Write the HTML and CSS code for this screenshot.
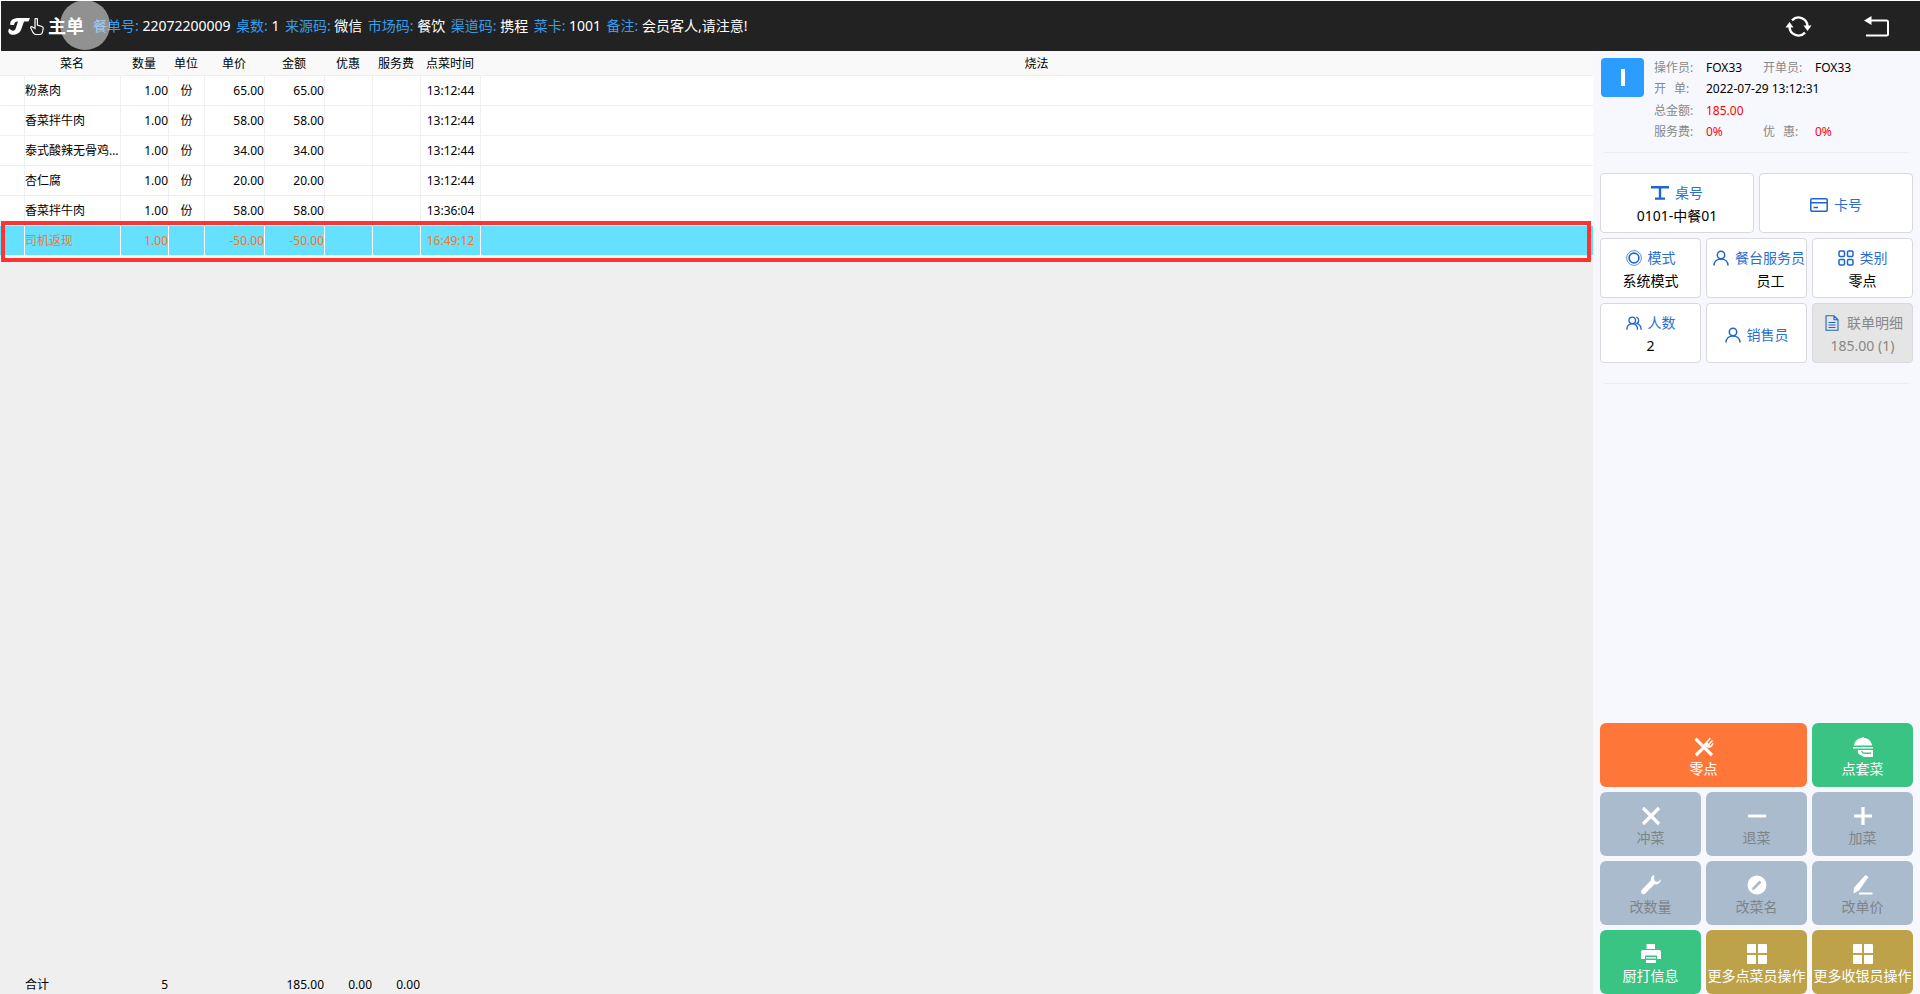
FILE: index.html
```html
<!DOCTYPE html>
<html lang="zh-CN">
<head>
<meta charset="utf-8">
<title>主单</title>
<link rel="stylesheet" href="styles.css">
</head>
<body>
<div class="page">
  <header class="topbar">
    <div class="logo">
      <svg class="logo-t" viewBox="0 0 22 17"><path d="M2.500 7C1 2 6 0 11 0H22L20.500 3.500H16L13 12C11.500 16 6 17.500 3 16.500C0 15.500 -.5 12 1.500 10.500C3 13 6.500 13.500 7.500 11L10 3.500C8 3.500 6 4.500 6 7Z"/></svg>
      <svg class="logo-hand" viewBox="0 0 14 17"><path d="M5 1.500a1.200 1.200 0 0 1 2.400 0V7L12 8.500c1 .3 1.300 1 1.200 2L12.500 14c-.2 1.500-1 2.500-3 2.500H6c-1.500 0-2-1-3-2L.8 10c-.5-1 .8-2 1.800-1L5 10.500Z"/></svg>
      <span class="logo-text">主单</span>
    </div>
    <div class="meta">
      <span><b>餐单号: </b>22072200009</span>
      <span><b>桌数: </b>1</span>
      <span><b>来源码: </b>微信</span>
      <span><b>市场码: </b>餐饮</span>
      <span><b>渠道码: </b>携程</span>
      <span><b>菜卡: </b>1001</span>
      <span><b>备注: </b>会员客人,请注意!</span>
    </div>
    <div class="top-actions">
      <svg class="ic-refresh" viewBox="0 0 27 21"><path d="M7 4.300A9 9 0 0 1 22.500 10M20 16.700A9 9 0 0 1 4.500 11"/><polygon points="18.500,9.500 26.500,9.500 22.500,15"/><polygon points="0.500,11.500 8.500,11.500 4.500,6"/></svg>
      <svg class="ic-back" viewBox="0 0 25 21"><polygon points="0,4.500 7.500,0 7.500,9"/><path d="M7 4.500H22.500Q24 4.500 24 6V18Q24 19.500 22.500 19.500H2"/></svg>
    </div>
    <div class="touch-dot"></div>
  </header>

  <div class="content">
    <main class="main">
      <div class="row head">
        <div></div><div>菜名</div><div>数量</div><div>单位</div><div>单价</div><div>金额</div><div>优惠</div><div>服务费</div><div>点菜时间</div><div>烧法</div>
      </div>
      <div class="row item">
        <div></div><div class="name">粉蒸肉</div><div class="num">1.00</div><div>份</div><div class="num">65.00</div><div class="num">65.00</div><div></div><div></div><div>13:12:44</div><div></div>
      </div>
      <div class="row item">
        <div></div><div class="name">香菜拌牛肉</div><div class="num">1.00</div><div>份</div><div class="num">58.00</div><div class="num">58.00</div><div></div><div></div><div>13:12:44</div><div></div>
      </div>
      <div class="row item">
        <div></div><div class="name">泰式酸辣无骨鸡爪</div><div class="num">1.00</div><div>份</div><div class="num">34.00</div><div class="num">34.00</div><div></div><div></div><div>13:12:44</div><div></div>
      </div>
      <div class="row item">
        <div></div><div class="name">杏仁腐</div><div class="num">1.00</div><div>份</div><div class="num">20.00</div><div class="num">20.00</div><div></div><div></div><div>13:12:44</div><div></div>
      </div>
      <div class="row item">
        <div></div><div class="name">香菜拌牛肉</div><div class="num">1.00</div><div>份</div><div class="num">58.00</div><div class="num">58.00</div><div></div><div></div><div>13:36:04</div><div></div>
      </div>
      <div class="row item selected">
        <div></div><div class="name">司机返现</div><div class="num">1.00</div><div></div><div class="num">-50.00</div><div class="num">-50.00</div><div></div><div></div><div>16:49:12</div><div></div>
      </div>
      <div class="row total">
        <div></div><div class="name">合计</div><div class="num">5</div><div></div><div></div><div class="num">185.00</div><div class="num">0.00</div><div class="num">0.00</div><div></div><div></div>
      </div>
      <div class="highlight"></div>
    </main>

    <aside class="side">
      <section class="info">
        <div class="badge"><span></span></div>
        <div class="info-grid">
          <span class="lb">操作员:</span><span>FOX33</span><span class="lb">开单员:</span><span>FOX33</span>
          <span class="lb">开&ensp;&thinsp;单:</span><span class="wide">2022-07-29 13:12:31</span>
          <span class="lb">总金额:</span><span class="wide red">185.00</span>
          <span class="lb">服务费:</span><span class="red">0%</span><span class="lb">优&ensp;&thinsp;惠:</span><span class="red">0%</span>
        </div>
      </section>
      <hr class="rule">
      <section class="cards">
        <div class="card s3">
          <div class="card-label"><svg class="ic" viewBox="0 0 18 14"><path d="M0 0H18V2.500H10.200V11.500H14V13.800H4V11.500H7.800V2.500H0Z"/></svg>桌号</div>
          <div class="card-value">0101-中餐01</div>
        </div>
        <div class="card s3">
          <div class="card-label"><svg class="ic ic-card" viewBox="0 0 18 14"><path d="M2 .8H16A1.200 1.200 0 0 1 17.200 2V12A1.200 1.200 0 0 1 16 13.200H2A1.200 1.200 0 0 1 .8 12V2A1.200 1.200 0 0 1 2 .8ZM.8 4.800H17.200"/><path d="M3.500 9.500H8"/></svg>卡号</div>
        </div>
        <div class="card s2">
          <div class="card-label"><svg class="ic ic-line ic-m" viewBox="0 0 18 18"><circle cx="9" cy="9" r="8.300" stroke-width=".8"/><circle cx="9" cy="9" r="5.500" stroke-width="1.800"/></svg>模式</div>
          <div class="card-value">系统模式</div>
        </div>
        <div class="card s2">
          <div class="card-label nudge"><svg class="ic ic-line ic-m" viewBox="0 0 16 16"><circle cx="8" cy="5" r="3.700"/><path d="M1 15.500C1 11.500 4 9 8 9S15 11.500 15 15.500"/></svg>餐台服务员</div>
          <div class="card-value shifted">员工</div>
        </div>
        <div class="card s2">
          <div class="card-label"><svg class="ic ic-line ic-m" viewBox="0 0 16 16"><rect x="1" y="1" width="5.500" height="5.500" rx="1.200"/><rect x="9.500" y="1" width="5.500" height="5.500" rx="1.200"/><rect x="1" y="9.500" width="5.500" height="5.500" rx="1.200"/><rect x="9.500" y="9.500" width="5.500" height="5.500" rx="1.200"/></svg>类别</div>
          <div class="card-value">零点</div>
        </div>
        <div class="card s2">
          <div class="card-label"><svg class="ic ic-line ic-m" viewBox="0 0 18 16"><circle cx="7" cy="5" r="3.700"/><path d="M1 15.500C1 11.500 3 9 7 9S13 11.500 13 15.500M11.500 1.500A3.700 3.700 0 0 1 12 8.500C15 9.300 17 11.500 17 15.500"/></svg>人数</div>
          <div class="card-value">2</div>
        </div>
        <div class="card s2">
          <div class="card-label"><svg class="ic ic-line ic-m" viewBox="0 0 16 16"><circle cx="8" cy="5" r="3.700"/><path d="M1 15.500C1 11.500 4 9 8 9S15 11.500 15 15.500"/></svg>销售员</div>
        </div>
        <div class="card s2 muted">
          <div class="card-label wide-gap"><svg class="ic ic-line ic-doc" viewBox="0 0 14 16"><path d="M1 .8H9L13 4.800V15.200H1ZM9 .8V4.800H13M3.500 7.500H10.500M3.500 10H10.500M3.500 12.500H10.500"/></svg>联单明细</div>
          <div class="card-value">185.00 (1)</div>
        </div>
      </section>
      <hr class="rule rule-2">
      <section class="actions">
        <div class="act orange wide-act">
          <svg class="act-ic" viewBox="0 0 20 20"><path d="M2.500 .5L19 17L17 19.500L.5 3Z"/><path d="M8.500 9.500L.8 17L3 19.500L11 11.500Z"/><path d="M9.500 7.500L15.800 .8L16.800 1.800L13.500 5.700L14.500 6.700L18 3L19 4L15.500 7.700L16.300 8.500L19.300 5.500C20 8 17.500 12 12.500 10.500Z"/></svg>
          <span>零点</span>
        </div>
        <div class="act green">
          <svg class="act-ic" viewBox="0 0 20 20"><path d="M10 0A1 1 0 0 1 11 1C16 1.500 18.500 4.500 19 8.500H1C1.500 4.500 4 1.500 9 1A1 1 0 0 1 10 0ZM0 10H20V11.500H0ZM5 13H20V20H11L6.500 17.500C5 16.500 4.500 15 5 13ZM8 14C8.500 16 10 17 12.500 17H18V15.500H12C10.500 15.500 9.800 15 9.500 14Z" fill-rule="evenodd"/></svg>
          <span>点套菜</span>
        </div>
        <div class="act slate">
          <svg class="act-ic act-stroke" viewBox="0 0 20 20"><path d="M2 2L18 18M18 2L2 18"/></svg>
          <span>冲菜</span>
        </div>
        <div class="act slate">
          <svg class="act-ic act-stroke" viewBox="0 0 22 20"><path d="M1 10H21"/></svg>
          <span>退菜</span>
        </div>
        <div class="act slate">
          <svg class="act-ic act-stroke" viewBox="0 0 20 20"><path d="M1 10H19M10 1V19"/></svg>
          <span>加菜</span>
        </div>
        <div class="act slate">
          <svg class="act-ic" viewBox="0 0 20 20"><path d="M13.500 0C11 .3 9.500 2.500 10 5.200L.7 15C-.3 16.200 0 17.500 .8 18.500C1.800 19.500 3.300 19.500 4.300 18.500L13.500 9.300C16.500 10 19.700 8 20 4.200L16.800 7L13.800 6L13 3Z"/></svg>
          <span>改数量</span>
        </div>
        <div class="act slate">
          <svg class="act-ic" viewBox="0 0 20 20"><path fill-rule="evenodd" d="M10 .5A9.500 9.500 0 1 1 10 19.500A9.500 9.500 0 0 1 10 .5ZM12.500 5.500L5.500 12.500L5 15L7.500 14.500L14.500 7.500Z"/></svg>
          <span>改菜名</span>
        </div>
        <div class="act slate">
          <svg class="act-ic" viewBox="0 0 20 20"><path d="M12.500 0L15.500 2L6 15.500L.5 18.500L1 12.500ZM6 17.500H19.500V19.500H6Z"/></svg>
          <span>改单价</span>
        </div>
        <div class="act green">
          <svg class="act-ic" viewBox="0 0 20 20"><path fill-rule="evenodd" d="M5.500 0H14V5H5.500ZM2 6H18A2 2 0 0 1 20 8V15H16V11.500H4V15H0V8A2 2 0 0 1 2 6ZM5 13H15V14.500H5ZM5 16H15V19H5Z"/></svg>
          <span>厨打信息</span>
        </div>
        <div class="act gold">
          <svg class="act-ic" viewBox="0 0 20 20"><path d="M1 0H9V9H0V1A1 1 0 0 1 1 0ZM11 0H19A1 1 0 0 1 20 1V9H11ZM0 11H9V20H1A1 1 0 0 1 0 19ZM11 11H20V19A1 1 0 0 1 19 20H11Z"/></svg>
          <span>更多点菜员操作</span>
        </div>
        <div class="act gold">
          <svg class="act-ic" viewBox="0 0 20 20"><path d="M1 0H9V9H0V1A1 1 0 0 1 1 0ZM11 0H19A1 1 0 0 1 20 1V9H11ZM0 11H9V20H1A1 1 0 0 1 0 19ZM11 11H20V19A1 1 0 0 1 19 20H11Z"/></svg>
          <span>更多收银员操作</span>
        </div>
      </section>
    </aside>
  </div>
</div>
</body>
</html>
```
FILE: styles.css
```css
* { box-sizing: border-box; }
html, body { margin: 0; padding: 0; height: 100%; background: #fff; overflow: hidden; }
body { font-family: "Noto Sans", "Noto Sans CJK SC", sans-serif; font-size: 12px; color: #000; }

.page { height: 994px; padding-top: 1px; display: flex; flex-direction: column; }

/* top bar */
.topbar { position: relative; height: 50px; margin-left: 1px; background: #222; color: #fff; display: flex; align-items: center; flex: none; }
.logo { display: flex; align-items: center; width: 92px; padding-left: 7px; flex: none; }
.logo-t { width: 22px; height: 17px; fill: #fff; }
.logo-hand { width: 14px; height: 17px; fill: none; stroke: #fff; stroke-width: 1.200; }
.logo-text { margin-left: 4px; font-size: 18px; font-weight: 700; line-height: 20px; white-space: nowrap; }
.meta { display: flex; gap: 5.500px; font-size: 14px; line-height: 20px; white-space: pre; }
.meta b { font-weight: 400; color: #3a9be8; }
.top-actions { margin-left: auto; display: flex; align-items: center; gap: 52px; padding-right: 31px; }
.ic-refresh { width: 27px; height: 21px; fill: #fff; }
.ic-refresh path { fill: none; stroke: #fff; stroke-width: 2.400; }
.ic-back { width: 25px; height: 21px; fill: #fff; }
.ic-back path { fill: none; stroke: #fff; stroke-width: 2; }
.touch-dot { position: absolute; left: 59px; top: -1px; width: 50px; height: 50px; border-radius: 50%; background: rgba(255, 255, 255, .5); }

/* layout */
.content { flex: 1; display: flex; min-height: 0; }
.main { position: relative; flex: 1; min-width: 0; background: #efefef; display: flex; flex-direction: column; }
.side { width: 327px; flex: none; background: #f7f8fd; padding: 0 7px; display: flex; flex-direction: column; }

/* table */
.row { display: grid; grid-template-columns: 24px 96px 48px 36px 60px 60px 48px 48px 60px 1fr; text-align: center; flex: none; }
.row > div { min-width: 0; white-space: nowrap; overflow: hidden; }
.head { height: 25px; line-height: 26px; background: #f9f9f9; border-bottom: 1px solid #eee; }
.item { height: 30px; line-height: 30px; background: #fff; border-bottom: 1px solid #efefef; }
.item > div + div { border-left: 1px solid #efefef; }
.name { text-align: left; text-overflow: ellipsis; }
.num { text-align: right; }
.selected { height: 32px; background: #66e0ff; color: #f07a1e; border-bottom: 3px solid #eaf7fb; }
.selected > div + div { border-left-color: #fff; }
.total { margin-top: auto; height: 20px; line-height: 22px; }
.total .name { padding-left: 1px; }
.highlight { position: absolute; left: 1px; top: 170px; width: 1590px; height: 41px; border: 4px solid #f33; }

/* info */
.info { display: flex; gap: 10px; padding: 5px 0 11px 1px; }
.badge { width: 43px; height: 39px; margin-top: 2px; border-radius: 4px; background: #2b9dff; display: flex; align-items: center; justify-content: center; flex: none; }
.badge span { width: 4px; height: 17px; background: #fff; }
.info-grid { display: grid; grid-template-columns: 52px 57px 52px auto; grid-auto-rows: 21.330px; line-height: 23px; flex: 1; }
.lb { color: #888; white-space: pre; }
.wide { grid-column: span 3; }
.red { color: #f00; }
.rule { border: 0; height: 1px; background: #ebedf2; margin: 0 4px; flex: none; }
.rule-2 { margin-top: 20px; }

/* cards */
.cards { margin-top: 20px; display: grid; grid-template-columns: repeat(6, 1fr); grid-auto-rows: 60px; gap: 5px; }
.card { background: #fff; border: 1px solid #d8d8de; border-radius: 4px; padding-top: 3px; display: flex; flex-direction: column; align-items: center; justify-content: center; font-size: 14px; line-height: 22px; white-space: nowrap; }
.s3 { grid-column: span 3; }
.s2 { grid-column: span 2; }
.card-label { display: flex; align-items: center; gap: 6px; color: #2a6fd0; }
.nudge { padding-left: 5px; }
.wide-gap { gap: 8px; padding-left: 3px; }
.card-value { color: #000; margin-top: 1px; }
.shifted { padding-left: 28px; }
.ic { width: 18px; height: 14px; fill: #1e66cc; flex: none; }
.ic-card { fill: none; stroke: #1e66cc; stroke-width: 1.500; }
.ic-line { fill: none; stroke: #1e66cc; stroke-width: 1.500; }
.ic-m { width: 16px; height: 16px; }
.ic-doc { width: 14px; height: 16px; stroke-width: 1.100; }
.muted { background: #e5e5e5; }
.muted .card-label, .muted .card-value { color: #888; }

/* actions */
.actions { margin-top: auto; display: grid; grid-template-columns: repeat(3, 1fr); grid-auto-rows: 64px; gap: 5px; }
.act { border-radius: 6px; display: flex; flex-direction: column; align-items: center; padding-top: 14px; color: #fff; font-size: 14px; line-height: 20px; white-space: nowrap; }
.act span { margin-top: 2px; }
.act-ic { width: 20px; height: 20px; fill: #fff; flex: none; }
.act-stroke { fill: none; stroke: #fff; stroke-width: 3.200; }
.wide-act { grid-column: span 2; }
.orange { background: #ff7738; }
.green { background: #3ac483; }
.slate { background: #a9bbcd; color: #7f8489; }
.gold { background: #bda24a; }
```
